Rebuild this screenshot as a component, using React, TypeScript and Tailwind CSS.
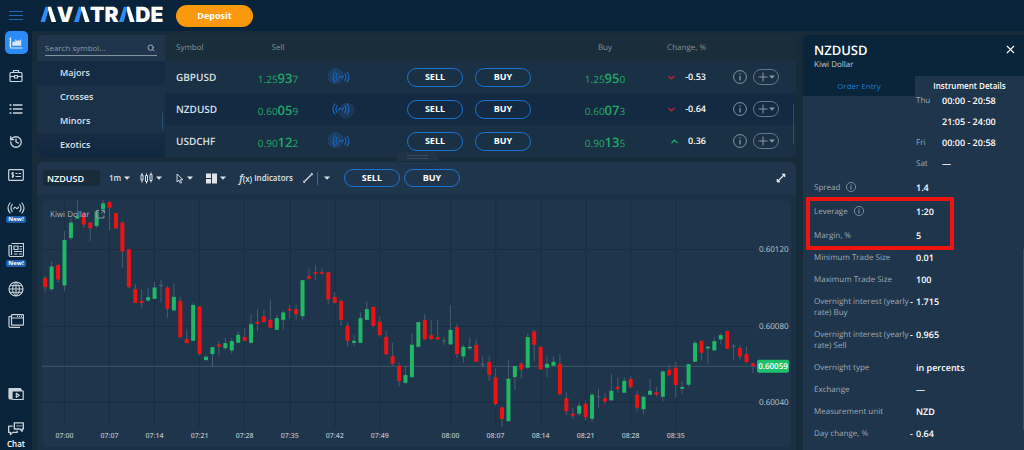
import React from "react";
import { History, Search, X } from "lucide-react";

type Candle = [kind: "u" | "d" | "n", high: number, top: number, bottom: number, low: number];

const candles: Candle[] = [
  ["d", 276, 278, 287.3, 292.6], ["u", 261.3, 266.6, 289.3, 291.3], ["d", 264.5, 265, 279.6, 282.6],
  ["u", 231, 240, 285.6, 291.6], ["u", 218, 222.6, 238, 240.6], ["u", 200, 216.6, 218.6, 219],
  ["d", 212, 213, 224.6, 228], ["d", 222, 222.6, 228.3, 241], ["u", 210, 211.3, 226, 228],
  ["u", 200, 203.3, 209.3, 210], ["d", 200.6, 202, 207.6, 230.6], ["d", 213, 213, 228.3, 229],
  ["d", 221, 222.6, 251.6, 268], ["d", 249, 249.3, 287.3, 288], ["d", 284, 289.3, 303, 303],
  ["d", 289.6, 301, 303, 308.6], ["u", 287.6, 297.3, 300.6, 302], ["u", 282, 287.6, 299, 299],
  ["n", 280, 285, 286, 302.6], ["d", 286, 287.6, 309, 318], ["u", 284, 297, 310.6, 311],
  ["d", 297, 301, 337.3, 338.6], ["d", 329.6, 339.3, 343.3, 343.3], ["u", 303, 305, 341, 341],
  ["d", 306, 306.6, 354.3, 356], ["u", 355, 357, 360.3, 361], ["u", 347, 347.3, 354.3, 367.3],
  ["d", 341.6, 344.6, 347, 356], ["u", 337.6, 343.3, 348.3, 350.6], ["u", 338, 341.3, 350.6, 354],
  ["u", 331.3, 335, 343, 343], ["d", 328.3, 337.3, 341, 341], ["u", 314.3, 324.3, 343, 344],
  ["d", 309.3, 322, 324, 331.3], ["d", 310.3, 316.6, 322, 322.6], ["d", 299.6, 320, 328, 328],
  ["u", 314.6, 318.3, 330, 330], ["u", 310.6, 312.6, 320, 330], ["d", 305, 309, 310.6, 319.3],
  ["d", 305, 309.3, 314.3, 320], ["u", 280, 280.3, 316.3, 320], ["d", 268.6, 276.3, 279, 279],
  ["d", 265, 272.3, 274, 280], ["d", 268.6, 272.3, 274, 274], ["d", 272, 272.3, 299.6, 304.3],
  ["d", 292, 297, 303, 304], ["d", 299.6, 301, 320, 326], ["d", 322.6, 326, 341, 346.6],
  ["u", 335, 341, 343, 346], ["u", 312.6, 318.3, 343, 343], ["u", 301, 309.3, 320, 320],
  ["d", 307, 307, 326, 327.6], ["d", 316, 322, 335.3, 337], ["d", 331, 337, 354.6, 355],
  ["d", 343, 356.4, 364, 366], ["d", 362.6, 366, 381.3, 387], ["u", 366, 375.3, 383, 384],
  ["u", 333.3, 345, 377.3, 378], ["u", 322, 322.3, 347, 347], ["d", 314.3, 320, 339.6, 340],
  ["d", 320.3, 335.3, 339.3, 340], ["d", 320.3, 337.3, 339.6, 340], ["n", 337.3, 340.6, 341.6, 345],
  ["u", 305, 330, 344.6, 345], ["d", 324, 327.3, 354.3, 358], ["u", 345, 347, 356.6, 363.3],
  ["u", 337.6, 347, 348.6, 350.6], ["d", 339.6, 345, 362, 362], ["n", 356.6, 364, 365, 367.6],
  ["d", 356.6, 362, 375.3, 381.3], ["d", 368.6, 377.6, 404.3, 406], ["d", 407, 407.6, 419.3, 427.3],
  ["u", 360.3, 379, 421.3, 422.6], ["u", 366, 366.3, 377.3, 390.6], ["d", 362, 364, 369.6, 379],
  ["u", 333.6, 337.3, 368, 369], ["d", 330, 331.6, 345, 362], ["d", 346, 347, 369.6, 370],
  ["u", 356.6, 364, 368, 377.3], ["u", 356.6, 362, 366, 366], ["d", 354.6, 364, 394.6, 395],
  ["d", 392.6, 398.3, 411.6, 415.6], ["d", 408, 414, 416, 419.3], ["u", 402, 406, 414, 416.6],
  ["d", 400.6, 404, 417.6, 421], ["u", 393, 395, 419, 422.6], ["n", 389, 396.6, 397.6, 408],
  ["d", 393, 398.3, 402, 404], ["u", 374, 391, 400.6, 401], ["d", 377.6, 387, 389, 393],
  ["u", 377.6, 381, 393, 393], ["d", 376, 379.3, 387.3, 389], ["d", 391.3, 395, 408, 411.6],
  ["u", 396, 397, 409.6, 415], ["u", 379, 391, 395, 395], ["d", 387, 392.6, 395, 396.6],
  ["u", 371, 371.6, 397, 402], ["d", 364.6, 370, 375.6, 376], ["d", 362, 368, 385.3, 398.3],
  ["u", 381.3, 387.3, 389, 394.3], ["u", 364, 364.3, 385, 387], ["u", 341, 343, 362, 362],
  ["d", 341, 341, 353, 360.6], ["u", 346, 347, 348.6, 364.3], ["u", 337.3, 341.3, 350.6, 351],
  ["u", 333.3, 335.3, 339.6, 344.3], ["d", 331, 331.3, 349, 349], ["n", 344.3, 346, 347, 360.6],
  ["d", 345.3, 348.3, 356.6, 360], ["d", 347, 354.3, 362.3, 363.6], ["d", 363, 363.6, 366.3, 373.3],
];

const STEP = 6.443;
const candleX = (i: number) => 64.5 + (i - 3) * STEP;

const times: [string, number][] = [
  ["07:00", 3], ["07:07", 10], ["07:14", 17], ["07:21", 24], ["07:28", 31], ["07:35", 38], ["07:42", 45],
  ["07:49", 52], ["08:00", 63], ["08:07", 70], ["08:14", 77], ["08:21", 84], ["08:28", 91], ["08:35", 98],
];

const prices: [string, number][] = [["0.60120", 249.5], ["0.60080", 326.5], ["0.60040", 402.5]];

function CandleChart() {
  return (
    <svg viewBox="42 200 750 247" className="block w-full rounded-md bg-[#1f354c]" role="img" aria-label="Kiwi Dollar candlestick chart">
      {times.map(([t, i]) => (
        <line key={t} x1={Math.floor(candleX(i)) + 0.5} x2={Math.floor(candleX(i)) + 0.5} y1={200} y2={427} stroke="#192d3f" />
      ))}
      {prices.map(([p, y]) => (
        <line key={p} x1={42} x2={757} y1={y} y2={y} stroke="#192d3f" />
      ))}
      <line x1={42} x2={758} y1={366.5} y2={366.5} stroke="#43566a" />
      {candles.map(([kind, high, top, bottom, low], i) => {
        const x = candleX(i);
        const fill = kind === "u" ? "#20b866" : kind === "d" ? "#ec1313" : "#53657a";
        return (
          <g key={i}>
            <line x1={x} x2={x} y1={high} y2={low} stroke="#4d6073" strokeWidth={0.9} />
            <rect x={x - 2} y={top} width={4} height={Math.max(bottom - top, 1)} fill={fill} />
          </g>
        );
      })}
      <text x={50} y={217.5} fontSize={8} fill="#a9b3bc">Kiwi Dollar</text>
      <path d="M99 210.5h-2.5v7.5h7.5v-2.5M101.5 210.5h3v3M101.5 213.5l3-3" fill="none" stroke="#8f9ba6" strokeWidth={1} />
      {times.map(([t, i]) => (
        <text key={t} x={candleX(i)} y={438.5} fontSize={7} fontWeight={600} textAnchor="middle" fill="#b4bcc4">{t}</text>
      ))}
      {prices.map(([p, y]) => (
        <text key={p} x={760} y={y + 3} fontSize={8} fill="#c0c8cf">{p}</text>
      ))}
      <rect x={758} y={360} width={32} height={13} rx={2} fill="#1fbf6b" />
      <text x={774} y={369.5} fontSize={8} fontWeight={600} textAnchor="middle" fill="#fff">0.60059</text>
    </svg>
  );
}

function Icon({ children, size = 16, box = 16 }: { children: React.ReactNode; size?: number; box?: number }) {
  return (
    <svg width={size} height={size} viewBox={`0 0 ${box} ${box}`} fill="none" stroke="currentColor" strokeWidth={1.2} strokeLinejoin="round" aria-hidden="true">
      {children}
    </svg>
  );
}

const Waves = () => (
  <svg width="18" height="12" viewBox="0 0 18 12" fill="none" stroke="currentColor" strokeWidth="1.2" strokeLinecap="round" aria-hidden="true">
    <path d="M3 1C0.6 4 0.6 8 3 11M5.2 2.5C3.6 4.7 3.6 7.3 5.2 9.5M15 1c2.4 3 2.4 7 0 10M12.8 2.5c1.6 2.2 1.6 4.8 0 7M6.5 6.8c1-2 2-1.8 2.7-.8s1.5.8 2.4-1" />
  </svg>
);

const Caret = () => (
  <svg width="6" height="4" viewBox="0 0 6 4" fill="currentColor" aria-hidden="true"><path d="M0 .5h6L3 3.8z" /></svg>
);

const InfoMark = ({ size }: { size: number }) => (
  <svg width={size} height={size} viewBox="0 0 14 14" fill="none" stroke="currentColor" aria-hidden="true">
    <circle cx="7" cy="7" r="6.4" />
    <path d="M7 6v4.5M7 3.5v1.3" strokeWidth="1.3" />
  </svg>
);

function SideItem({ label, badge, className, children }: { label: string; badge?: string; className: string; children: React.ReactNode }) {
  return (
    <button type="button" aria-label={label} className={`flex w-full flex-col items-center justify-center text-[#ccd4da] ${className}`}>
      {children}
      {badge && <span className="mt-[2px] rounded-[2px] bg-[#1f5fae] px-[2px] text-[6px] leading-[7px] font-bold text-white">{badge}</span>}
    </button>
  );
}

function Sidebar() {
  return (
    <nav className="flex w-8 shrink-0 flex-col">
      <div className="mb-[5px] flex justify-center">
        <button type="button" aria-label="Trading" className="flex h-[23px] w-[23px] items-center justify-center rounded-[5px] bg-[#2b8cf7] text-[#dbe9f6]">
          <Icon>
            <path d="M2.5 2.5v10.500h12M1 4h1.5M1 7h1.5M1 10h1.5" />
            <path d="M4.500 10.500V7.500l1.500-1 1.500 1V4.500l1.500 2 1.500-1.500 1 1.500 1.500-2v6z" fill="currentColor" strokeWidth=".4" />
          </Icon>
        </button>
      </div>
      <SideItem label="Portfolio" className="h-[33px]">
        <Icon>
          <rect x="2" y="4.5" width="12" height="9" rx="1" />
          <path d="M5.5 4.5V2.5h5v2M2 8.5h4.5M9.5 8.5H14M6.5 7.5h3v2.5h-3z" />
        </Icon>
      </SideItem>
      <SideItem label="Orders" className="h-[33px]">
        <Icon><path d="M5 4h9.5M5 8h9.5M5 12h9.5M1.5 4h2M1.5 8h2M1.5 12h2" strokeWidth="1.5" /></Icon>
      </SideItem>
      <SideItem label="History" className="h-[33px]"><History size={14} strokeWidth={2.3} /></SideItem>
      <SideItem label="Funds" className="h-[33px]">
        <Icon>
          <rect x=".7" y="2.7" width="14.6" height="10.6" rx=".8" />
          <path d="M5.8 6.2c-2-.8-2.5 1.2-1 1.6s1 2-1 1.5M4.6 5v6M7.5 6.500h2M10.500 6.500h2.500M7.500 9.500h5.500" />
        </Icon>
      </SideItem>
      <SideItem label="Signals" className="h-[43px]" badge="New!"><Waves /></SideItem>
      <SideItem label="News" className="h-[40px]" badge="New!">
        <Icon>
          <path d="M3.5 1.5h12v11.5a1.5 1.5 0 0 1-1.5 1.5H2.5A1.5 1.5 0 0 1 1 13V3.5h2.5V13" />
          <path d="M6 4h4v3.5H6zM11.5 4.5h2.5M11.5 7h2.5M6 9.5h8M6 12h3.5M11 12h3" />
        </Icon>
      </SideItem>
      <SideItem label="Markets" className="h-[29px]">
        <Icon>
          <circle cx="8" cy="8" r="7" />
          <path d="M8 1v14M1 8h14M2 4.7h12M2 11.3h12M8 1C3.5 4.5 3.5 11.5 8 15M8 1c4.5 3.5 4.5 10.5 0 14" strokeWidth="1" />
        </Icon>
      </SideItem>
      <SideItem label="Windows" className="h-[35px]">
        <Icon>
          <rect x="3.5" y="1.7" width="12" height="10.5" rx=".8" />
          <path d="M3.5 5h12M9 3.4h1M11 3.4h1M13 3.4h1M3.5 3.5H1v9.500a1.300 1.300 0 0 0 1.300 1.300H12" />
        </Icon>
      </SideItem>
      <div className="mt-auto pt-8">
        <SideItem label="Videos" className="h-[33px]">
          <Icon>
            <path d="M3.5 4.5V13H2.3A1.3 1.3 0 0 1 1 11.7V2.5h11.5l1 2z" fill="currentColor" />
            <path d="M4 5h11.2v8.5H5.3A1.3 1.3 0 0 1 4 12.2z" fill="#08233a" />
            <path d="M8.3 7.3v4l3-2z" />
          </Icon>
        </SideItem>
        <button type="button" className="mt-[10px] flex w-full flex-col items-center text-[#ccd4da]">
          <Icon size={18}>
            <path d="M6.5 2.500h8v5.500h-1V10l-2-2h-5z" />
            <path d="M5 5.500H1.500v5.500H3v2l2-2h4V9.500M8.500 5.200h1M10.200 5.200h1M12 5.200h1" />
          </Icon>
          <span className="text-[8px] leading-[12px] font-semibold text-white">Chat</span>
        </button>
      </div>
    </nav>
  );
}

function Logo() {
  const split = "bg-[linear-gradient(90deg,#2b8cf7_50%,#ffffff_50%)] bg-clip-text text-transparent";
  return (
    <div aria-label="AVATRADE" className="font-[Inter,sans-serif] text-[21px] leading-[31px] font-black text-white">
      <span className={split}>Λ</span>V<span className={split}>Λ</span>TR<span className={split}>Λ</span>DE
    </div>
  );
}

function TradeButton({ children, className }: { children: string; className: string }) {
  return (
    <button type="button" className={`rounded-full border border-[#1b74d3] text-center text-[9px] font-bold text-white ${className}`}>
      {children}
    </button>
  );
}

const groups = ["Majors", "Crosses", "Minors", "Exotics"];

function SymbolGroups() {
  return (
    <div className="relative flex w-32 shrink-0 flex-col bg-[#1b3148]">
      <div className="flex h-[26px] items-end bg-[#1f354c] px-2 pb-[5px]">
        <div className="flex w-full items-center border-b border-[#8493a0] text-[#b8c2ca]">
          <input aria-label="Search symbol" placeholder="Search symbol..." className="w-full min-w-0 bg-transparent text-[8px] leading-[14px] outline-none placeholder:text-[#8c9aa6]" />
          <Search size={8} strokeWidth={2.5} className="mr-[2px] shrink-0" />
        </div>
      </div>
      {groups.map((g, i) => (
        <button
          key={g}
          type="button"
          className={`h-6 px-[23px] text-left text-[9px] font-semibold text-[#d9e0e6] ${i === 0 ? "bg-[#152b43]" : ""} ${i === 3 ? "bg-linear-to-b from-[#182d44] to-[#102740]" : ""}`}
        >
          {g}
        </button>
      ))}
      <span className="absolute right-[2px] bottom-[27px] h-[17px] w-px bg-[#2c4e6e]" />
    </div>
  );
}

interface Quote {
  symbol: string;
  sell: [string, string, string];
  buy: [string, string, string];
  change: string;
}

const quotes: Quote[] = [
  { symbol: "GBPUSD", sell: ["1.25", "93", "7"], buy: ["1.25", "95", "0"], change: "-0.53" },
  { symbol: "NZDUSD", sell: ["0.60", "05", "9"], buy: ["0.60", "07", "3"], change: "-0.64" },
  { symbol: "USDCHF", sell: ["0.90", "12", "2"], buy: ["0.90", "13", "5"], change: "0.36" },
];

const Price = ({ parts }: { parts: [string, string, string] }) => (
  <span className="text-[10px] leading-4 text-[#23a866]">
    {parts[0]}<span className="text-[13px] font-semibold">{parts[1]}</span>{parts[2]}
  </span>
);

function QuoteTable() {
  return (
    <div className="relative min-w-0 flex-1">
      <table className="w-full table-fixed border-collapse">
        <colgroup>
          <col className="w-[81px]" /><col className="w-[64px]" /><col className="w-[62px]" /><col className="w-[194px]" />
          <col className="w-[78px]" /><col className="w-[62px]" /><col className="w-[90px]" />
        </colgroup>
        <thead>
          <tr className="h-[26px] bg-[#1a2d3b] text-[8px] text-[#84919c]">
            <th className="pl-[11px] text-left font-normal">Symbol</th>
            <th className="font-normal">Sell</th>
            <th aria-label="Signals" />
            <th aria-label="Trade" />
            <th className="font-normal">Buy</th>
            <th className="text-right font-normal">Change, %</th>
            <th aria-label="Actions" />
          </tr>
        </thead>
        <tbody>
          {quotes.map((q, i) => {
            const down = q.change.startsWith("-");
            return (
              <tr key={q.symbol} className={`h-8 ${i === 1 ? "bg-[#142a42]" : "bg-[#1a3045]"}`}>
                <td className="pl-[11px] text-[10px] font-semibold text-[#d9e0e6]">{q.symbol}</td>
                <td className="text-center whitespace-nowrap"><Price parts={q.sell} /></td>
                <td>
                  <span className={`mx-auto flex h-5 w-7 items-center justify-center rounded-full text-[#1c67bb] ${i === 1 ? "bg-[radial-gradient(circle_at_70%_60%,#1b3858_35%,transparent_36%)]" : "bg-[radial-gradient(circle_at_30%_45%,#1b3f66_35%,transparent_36%)]"}`}>
                    <Waves />
                  </span>
                </td>
                <td>
                  <div className="flex justify-center gap-3">
                    <TradeButton className="h-[19px] w-14">SELL</TradeButton>
                    <TradeButton className="h-[19px] w-14">BUY</TradeButton>
                  </div>
                </td>
                <td className="text-center whitespace-nowrap"><Price parts={q.buy} /></td>
                <td className="text-[9px] font-semibold text-white">
                  <span className="flex items-center justify-end gap-[10px]">
                    <svg width="7" height="5" viewBox="0 0 7 5" fill="none" stroke={down ? "#b32a33" : "#23a866"} strokeWidth="1.3" aria-hidden="true">
                      <path d={down ? "M.5 1l3 2.8 3-2.8" : "M.5 4l3-2.8 3 2.8"} />
                    </svg>
                    {q.change}
                  </span>
                </td>
                <td>
                  <div className="flex items-center justify-end gap-[6px] pr-[17px] text-[#8694a1]">
                    <button type="button" aria-label={`${q.symbol} details`}><InfoMark size={14} /></button>
                    <button type="button" aria-label={`Add ${q.symbol}`} className="flex h-4 w-[26px] items-center justify-center gap-px rounded-full border border-[#65778a]">
                      <svg width="10" height="10" viewBox="0 0 10 10" stroke="currentColor" aria-hidden="true"><path d="M5 .5v9M.5 5h9" /></svg>
                      <Caret />
                    </button>
                  </div>
                </td>
              </tr>
            );
          })}
        </tbody>
      </table>
      <span className="absolute right-[2px] bottom-[13px] h-10 w-px bg-[#2c4e6e]" />
    </div>
  );
}

function Toolbar() {
  return (
    <div className="flex h-8 items-center bg-[#1f354c] px-[6px] text-[8px] font-semibold text-[#dfe5ea]">
      <div className="flex flex-1 items-center">
        <input aria-label="Chart symbol" defaultValue="NZDUSD" className="h-4 w-[57px] rounded-[2px] bg-[#182b3b] px-1 text-[9px] font-semibold text-white outline-none" />
        <button type="button" className="ml-[9px] flex items-center gap-[3px]">1m <Caret /></button>
        <button type="button" aria-label="Chart type" className="ml-[10px] flex items-center gap-[3px]">
          <svg width="13" height="12" viewBox="0 0 13 12" fill="none" stroke="currentColor" aria-hidden="true">
            <path d="M1 3h2v5H1zM5.5 3.5h2v6h-2zM10 2.5h2v6h-2zM2 1v2M2 8v2.5M6.5 1.5v2M6.5 9.5v2M11 .5v2M11 8.5v2" />
          </svg>
          <Caret />
        </button>
        <button type="button" aria-label="Cursor" className="ml-[14px] flex items-center gap-[3px]">
          <svg width="8" height="11" viewBox="0 0 8 11" fill="none" stroke="currentColor" strokeWidth=".9" aria-hidden="true">
            <path d="M1 1v8l2-1.8 1.3 3 1.3-.6L4.3 6.7H7z" />
          </svg>
          <Caret />
        </button>
        <button type="button" aria-label="Layout" className="ml-[13px] flex items-center gap-[3px]">
          <svg width="11" height="11" viewBox="0 0 11 11" fill="currentColor" aria-hidden="true">
            <path d="M0 .5h5v4.5H0zM0 6h5v4.5H0zM6 .5h5v10H6z" />
          </svg>
          <Caret />
        </button>
        <button type="button" className="ml-[13px] flex items-center gap-[2px]">
          <span><i className="text-[10px]">f</i>(x)</span> Indicators
        </button>
        <button type="button" aria-label="Draw line" className="ml-[10px]">
          <svg width="10" height="10" viewBox="0 0 10 10" stroke="currentColor" aria-hidden="true"><path d="M1.5 8.5l7-7" strokeWidth="1.3" /><path d="M.5 9.5l1-1M8.5 1.5l1-1" strokeWidth="2.2" /></svg>
        </button>
        <span className="ml-1 h-[13px] w-px bg-[#52667a]" />
        <button type="button" aria-label="Drawing tools" className="ml-[6px]"><Caret /></button>
        <TradeButton className="ml-[14px] h-[18px] w-14">SELL</TradeButton>
        <TradeButton className="ml-1 h-[18px] w-14">BUY</TradeButton>
      </div>
      <button type="button" aria-label="Expand" className="mr-1">
        <svg width="10" height="10" viewBox="0 0 10 10" stroke="currentColor" strokeWidth="1.3" fill="currentColor" aria-hidden="true">
          <path d="M2 8l6-6" /><path d="M6 1h3v3zM1 6v3h3z" strokeWidth=".7" />
        </svg>
      </button>
    </div>
  );
}

interface Detail {
  label: string;
  value: string;
  info?: boolean;
  negative?: boolean;
  height?: string;
}

const highlighted: Detail[] = [
  { label: "Leverage", value: "1:20", info: true, height: "h-6" },
  { label: "Margin, %", value: "5" },
];

const details: Detail[] = [
  { label: "Minimum Trade Size", value: "0.01" },
  { label: "Maximum Trade Size", value: "100" },
  { label: "Overnight interest (yearly rate) Buy", value: "1.715", negative: true, height: "h-[33px]" },
  { label: "Overnight interest (yearly rate) Sell", value: "0.965", negative: true, height: "h-[33px]" },
  { label: "Overnight type", value: "in percents" },
  { label: "Exchange", value: "—" },
  { label: "Measurement unit", value: "NZD" },
  { label: "Day change, %", value: "0.64", negative: true },
];

const hours = [["Thu", "00:00 - 20:58"], ["", "21:05 - 24:00"], ["Fri", "00:00 - 20:58"], ["Sat", "—"]];

const DetailRow = ({ label, value, info, negative, height = "h-[22px]" }: Detail) => (
  <div className={`flex pt-[5px] leading-[11px] ${height}`}>
    <dt className="flex w-24 shrink-0 items-start gap-[6px] text-[8px] text-[#9eabb7]">
      {label}{info && <InfoMark size={10} />}
    </dt>
    <dd className="flex text-[9px] font-semibold text-white">
      <span className="w-[6px]">{negative && "-"}</span>{value}
    </dd>
  </div>
);

function InstrumentPanel() {
  return (
    <aside className="flex w-[221px] shrink-0 flex-col overflow-hidden rounded-tl-md bg-[#1f354c]">
      <header className="flex h-[41px] items-start justify-between bg-[#0a253a] pt-2 pr-[7px] pl-[11px]">
        <div>
          <h2 className="text-[13px] leading-[14px] font-semibold text-white">NZDUSD</h2>
          <p className="text-[8px] leading-4 text-[#c3ccd4]">Kiwi Dollar</p>
        </div>
        <button type="button" aria-label="Close" className="text-white"><X size={13} strokeWidth={2} /></button>
      </header>
      <div role="tablist" className="flex h-5 text-[8px]">
        <button type="button" role="tab" aria-selected="false" className="w-[112px] bg-[#0a253a] text-[#2079d6]">Order Entry</button>
        <button type="button" role="tab" aria-selected="true" className="flex-1 bg-[#1f354c] font-semibold text-white">Instrument Details</button>
      </div>
      <div className="relative flex-1 pl-[11px]">
        <dl className="-mt-[6px] ml-[102px] leading-[11px]">
          {hours.map(([day, span]) => (
            <div key={day + span} className="flex h-[21px] items-center">
              <dt className="w-[26px] text-[8px] text-[#9eabb7]">{day}</dt>
              <dd className="text-[9px] font-semibold text-white">{span}</dd>
            </div>
          ))}
        </dl>
        <dl className="pt-[3px]">
          <DetailRow label="Spread" value="1.4" info height="h-6" />
          <div className="relative">
            {highlighted.map((d) => <DetailRow key={d.label} {...d} />)}
            <span className="pointer-events-none absolute -top-1 -left-2 h-[53px] w-[148px] border-4 border-[#ee1511]" />
          </div>
          {details.map((d) => <DetailRow key={d.label} {...d} />)}
        </dl>
        <span className="absolute top-[153px] right-0 bottom-5 w-px bg-[#2c4e6e]" />
      </div>
    </aside>
  );
}

export default function App() {
  return (
    <div className="flex min-h-screen flex-col bg-[#08233a] font-['Open_Sans',sans-serif] [text-rendering:geometricPrecision]">
      <header className="flex h-[31px] items-center">
        <button type="button" aria-label="Menu" className="flex w-[31px] justify-center text-[#2069ba]">
          <svg width="14" height="11" viewBox="0 0 14 11" stroke="currentColor" aria-hidden="true"><path d="M0 1.500h14M0 5.500h14M0 9.500h14" /></svg>
        </button>
        <div className="w-[145px] pl-[9px]"><Logo /></div>
        <button type="button" className="h-[22px] w-[77px] rounded-full bg-[#fb980b] text-[9px] font-bold text-white">Deposit</button>
      </header>
      <div className="flex flex-1">
        <Sidebar />
        <main className="flex min-w-0 flex-1 gap-[7px] bg-[#182b3a] pt-1 pl-[5px]">
          <div className="flex min-w-0 flex-1 flex-col gap-[5px]">
            <section className="relative flex rounded-md bg-[#1b3148]">
              <div className="flex w-full overflow-hidden rounded-md">
                <SymbolGroups />
                <QuoteTable />
              </div>
              <span className="absolute -bottom-1 left-1/2 -ml-5 flex h-[9px] w-[41px] items-center justify-center rounded-t bg-[#203347]">
                <span className="h-1 w-[21px] border-y border-[#364a5d]" />
              </span>
            </section>
            <section className="flex-1 overflow-hidden rounded-t-md bg-[#1a3045]">
              <Toolbar />
              <div className="px-[5px] pt-[6px]"><CandleChart /></div>
            </section>
          </div>
          <InstrumentPanel />
        </main>
      </div>
    </div>
  );
}
